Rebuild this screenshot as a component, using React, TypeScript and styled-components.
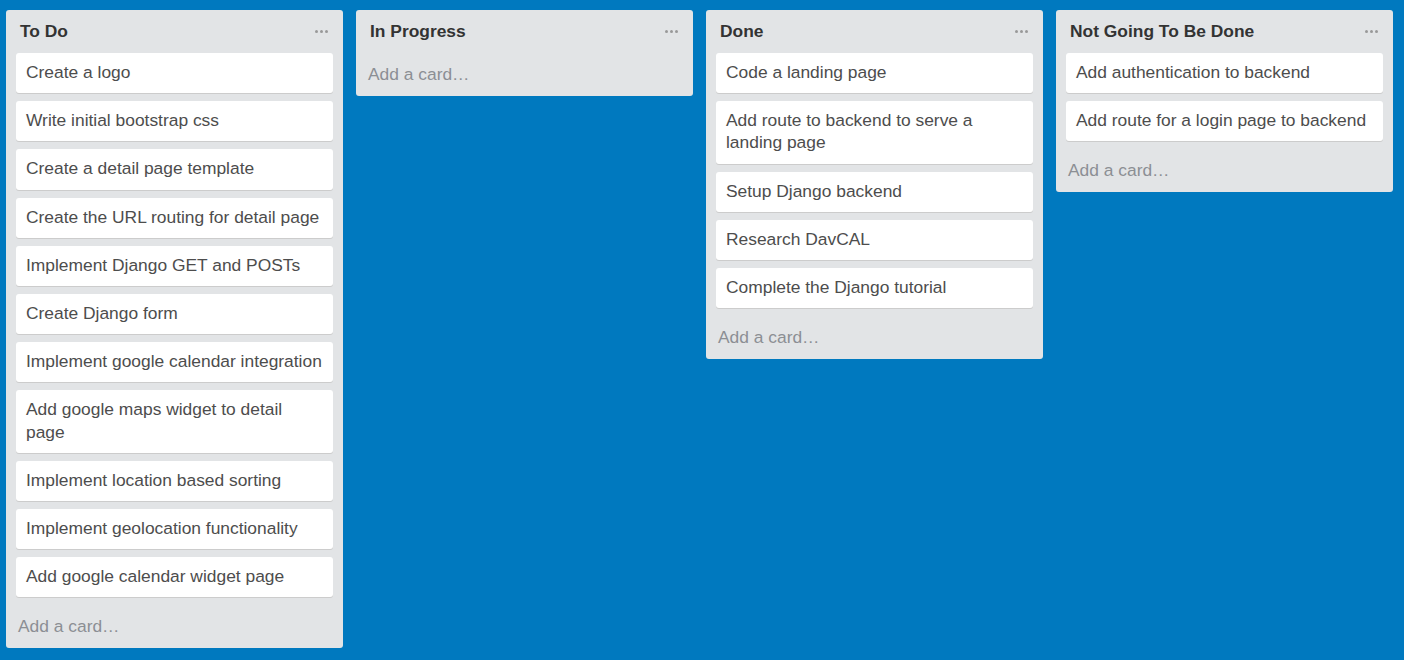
import React from "react";
import styled, { createGlobalStyle } from "styled-components";

const GlobalStyle = createGlobalStyle`
  html, body {
    margin: 0;
    padding: 0;
    background: #0079bf;
  }
  body {
    font-family: "Liberation Sans", Arial, sans-serif;
  }
`;

const Board = styled.div`
  display: flex;
  align-items: flex-start;
  gap: 13px;
  padding: 10px 6px;
  height: 660px;
  box-sizing: border-box;
  background: #0079bf;
`;

const List = styled.section`
  flex: 0 0 337px;
  width: 337px;
  background: #e2e4e6;
  border-radius: 3px;
  display: flex;
  flex-direction: column;
  box-sizing: border-box;
`;

const Header = styled.header`
  height: 43px;
  display: flex;
  align-items: center;
  justify-content: space-between;
  padding: 0 15px 0 14px;
  box-sizing: border-box;
`;

const Title = styled.h2`
  margin: 0;
  font-size: 17.4px;
  font-weight: 700;
  color: #333;
  line-height: 20px;
  padding-bottom: 1px;
`;

const MenuDots = styled.span`
  display: flex;
  gap: 2px;
  align-items: center;
`;

const Dot = styled.i`
  display: block;
  width: 3px;
  height: 3px;
  border-radius: 50%;
  background: #999;
`;

const Cards = styled.div`
  display: flex;
  flex-direction: column;
  gap: 8px;
  padding: 0 10px;
`;

const Card = styled.div`
  background: #fff;
  border-radius: 3px;
  box-shadow: 0 1px 0 #ccc;
  padding: 8px 10px 10px;
  font-size: 17.4px;
  line-height: 22.2px;
  color: #4d4d4d;
`;

const AddCard = styled.div<{ $hasCards: boolean }>`
  margin-top: ${(p) => (p.$hasCards ? "8px" : "0")};
  padding: 10px 12px 11px;
  font-size: 17.4px;
  line-height: 22px;
  color: #8c8f94;
`;

type ListData = { title: string; cards: string[] };

const lists: ListData[] = [
  {
    title: "To Do",
    cards: [
      "Create a logo",
      "Write initial bootstrap css",
      "Create a detail page template",
      "Create the URL routing for detail page",
      "Implement Django GET and POSTs",
      "Create Django form",
      "Implement google calendar integration",
      "Add google maps widget to detail page",
      "Implement location based sorting",
      "Implement geolocation functionality",
      "Add google calendar widget page",
    ],
  },
  { title: "In Progress", cards: [] },
  {
    title: "Done",
    cards: [
      "Code a landing page",
      "Add route to backend to serve a landing page",
      "Setup Django backend",
      "Research DavCAL",
      "Complete the Django tutorial",
    ],
  },
  {
    title: "Not Going To Be Done",
    cards: ["Add authentication to backend", "Add route for a login page to backend"],
  },
];

export default function App() {
  return (
    <>
      <GlobalStyle />
      <Board>
        {lists.map((l) => (
          <List key={l.title}>
            <Header>
              <Title>{l.title}</Title>
              <MenuDots>
                <Dot />
                <Dot />
                <Dot />
              </MenuDots>
            </Header>
            {l.cards.length > 0 && (
              <Cards>
                {l.cards.map((c) => (
                  <Card key={c}>{c}</Card>
                ))}
              </Cards>
            )}
            <AddCard $hasCards={l.cards.length > 0}>Add a card…</AddCard>
          </List>
        ))}
      </Board>
    </>
  );
}
